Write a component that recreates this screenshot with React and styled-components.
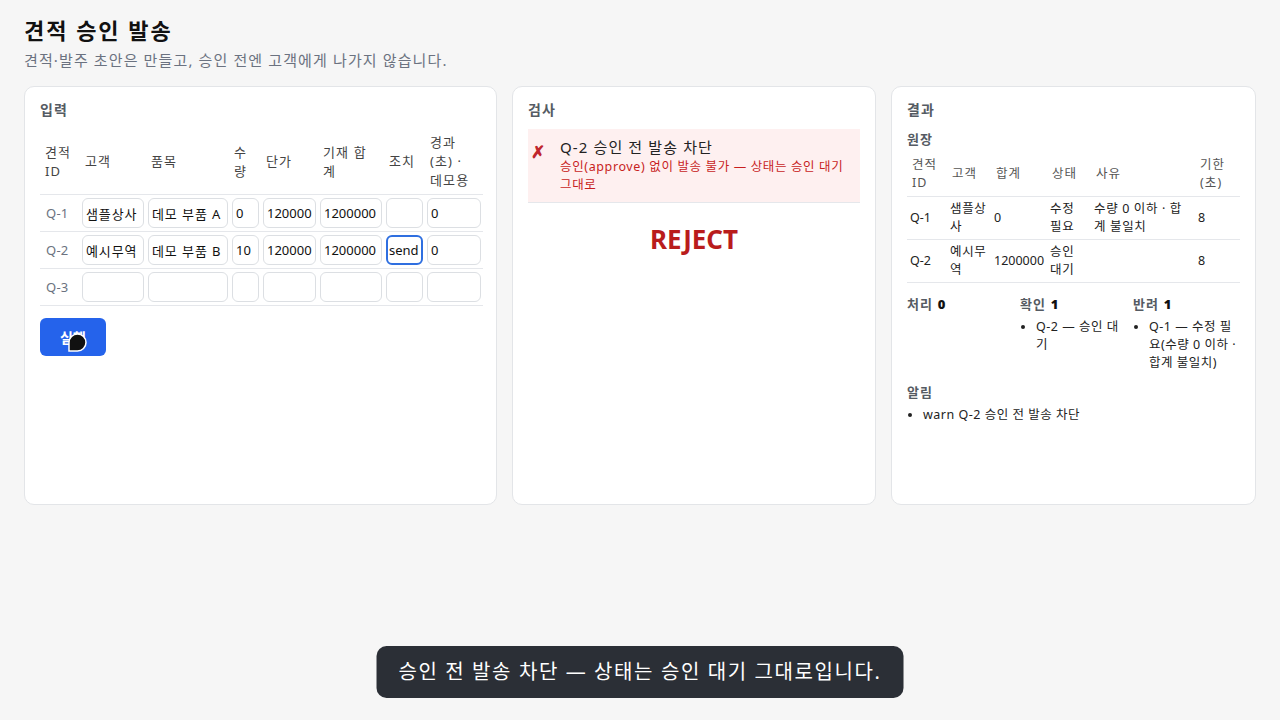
import React from 'react';
import styled, { createGlobalStyle } from 'styled-components';

const GlobalStyle = createGlobalStyle`
  html, body {
    margin: 0;
    padding: 0;
    background: #f6f6f6;
  }
  body {
    font-family: "Noto Sans", "Noto Sans CJK KR", sans-serif;
    color: #1f2328;
    letter-spacing: 0.07em;
  }
  * { box-sizing: border-box; }
`;

const Page = styled.div`
  padding: 14px 24px 24px;
  min-height: 100vh;
`;

const Title = styled.h1`
  margin: 0;
  font-size: 22px;
  line-height: 32px;
  font-weight: 700;
  letter-spacing: 0.09em;
  color: #111;
`;

const Subtitle = styled.p`
  margin: 3px 0 15px;
  font-size: 15px;
  line-height: 22px;
  color: #6b7280;
`;

const Columns = styled.div`
  display: grid;
  grid-template-columns: 473px 1fr 1fr;
  gap: 15px;
`;

const Card = styled.section`
  background: #fff;
  border: 1px solid #e3e5e8;
  border-radius: 10px;
  padding: 12px 15px 15px;
  min-height: 419px;
`;

const CardTitle = styled.h2`
  margin: 0 0 8px;
  font-size: 14px;
  line-height: 22px;
  font-weight: 700;
  color: #555b63;
`;

const Table = styled.table`
  width: 100%;
  border-collapse: collapse;
  table-layout: fixed;
  font-size: 13px;
`;

const Th = styled.th`
  text-align: left;
  font-weight: 400;
  color: #444;
  padding: 4px ${p => p.$pad || 5}px;
  line-height: 19px;
  vertical-align: middle;
  border-bottom: 1px solid #e5e7eb;
`;

const Td = styled.td`
  padding: 3px 2px;
  border-bottom: 1px solid #e5e7eb;
  vertical-align: middle;
`;

const IdCell = styled(Td)`
  padding-left: 6px;
  color: #6b7280;
  letter-spacing: 0.02em;
`;

const Field = styled.input`
  width: 100%;
  height: 30px;
  border: ${p => (p.$focused ? '2px solid #2f6fe0' : '1px solid #dcdfe3')};
  border-radius: 6px;
  padding: 0 ${p => (p.$focused ? 1 : 3)}px;
  font: inherit;
  font-size: 13px;
  letter-spacing: ${p => (p.$ko ? '0.07em' : '0')};
  color: #111;
  background: #fff;
  outline: none;
`;

const RunButton = styled.button`
  position: relative;
  margin-top: 12px;
  width: 66px;
  height: 38px;
  border: none;
  border-radius: 6px;
  background: #2563eb;
  color: #fff;
  font: inherit;
  font-size: 14px;
  font-weight: 700;
`;

const Pointer = styled.svg`
  position: absolute;
  left: 27px;
  top: 14px;
`;

const Alert = styled.div`
  display: flex;
  gap: 15px;
  background: #fef0f0;
  border-bottom: 1px solid #e5e7eb;
  padding: 7px 4px 8px 3px;
`;

const Cross = styled.span`
  color: #c0262d;
  font-size: 17px;
  font-weight: 700;
  line-height: 22px;
  margin-top: 5px;
  letter-spacing: 0;
`;

const AlertTitle = styled.div`
  font-size: 15px;
  line-height: 22px;
  color: #222;
`;

const AlertText = styled.div`
  font-size: 12.5px;
  line-height: 18px;
  letter-spacing: 0.05em;
  color: #c81e1e;
`;

const Verdict = styled.div`
  text-align: center;
  font-size: 26px;
  font-weight: 700;
  color: #b91c1c;
  margin-top: 18px;
  letter-spacing: 0;
`;

const SubTitle = styled.h3`
  margin: 0 0 2px;
  font-size: 13px;
  line-height: 20px;
  font-weight: 700;
  color: #555b63;
`;

const LedgerTable = styled.table`
  width: 100%;
  border-collapse: collapse;
  table-layout: fixed;
  font-size: 12.5px;
`;

const LTh = styled.th`
  text-align: left;
  font-weight: 400;
  color: #555;
  padding: 5px 3px 4px 5px;
  line-height: 18px;
  border-bottom: 1px solid #e5e7eb;
`;

const LTd = styled.td`
  padding: 3px 3px;
  line-height: 18px;
  color: #222;
  border-bottom: 1px solid #e5e7eb;
  letter-spacing: ${p => (p.$num ? '0' : '0.05em')};
`;

const Buckets = styled.div`
  display: grid;
  grid-template-columns: repeat(3, 1fr);
  gap: 0 6px;
  margin-top: 11px;
`;

const BucketLabel = styled.div`
  font-size: 13px;
  line-height: 20px;
  color: #555b63;
  font-weight: 700;

  b { color: #111; }
`;

const List = styled.ul`
  margin: 4px 0 0;
  padding-left: 16px;
  font-size: 12.5px;
  line-height: 18px;
  letter-spacing: 0.04em;
  color: #222;
`;

const Notice = styled.div`
  margin-top: 10px;
`;

const Toast = styled.div`
  position: fixed;
  bottom: 22px;
  left: 50%;
  transform: translateX(-50%);
  background: #2b2f36;
  color: #fff;
  border-radius: 10px;
  padding: 11px 22px;
  font-size: 20px;
  line-height: 30px;
  letter-spacing: 0.08em;
  white-space: nowrap;
`;

const inputRows = [
  { id: 'Q-1', customer: '샘플상사', item: '데모 부품 A', qty: '0', price: '120000', total: '1200000', action: '', elapsed: '0' },
  { id: 'Q-2', customer: '예시무역', item: '데모 부품 B', qty: '10', price: '120000', total: '1200000', action: 'send', elapsed: '0', focus: true },
  { id: 'Q-3', customer: '', item: '', qty: '', price: '', total: '', action: '', elapsed: '' },
];

const colWidths = [40, 66, 84, 31, 57, 66, 41, 58];
const ledgerWidths = [40, 44, 56, 44, 104, 45];

const App = () => {
  return (
    <>
      <GlobalStyle />
      <Page>
        <Title>견적 승인 발송</Title>
        <Subtitle>견적·발주 초안은 만들고, 승인 전엔 고객에게 나가지 않습니다.</Subtitle>
        <Columns>
          <Card>
            <CardTitle>입력</CardTitle>
            <Table>
              <colgroup>
                {colWidths.map((w, i) => <col key={i} style={{ width: w }} />)}
              </colgroup>
              <thead>
                <tr>
                  <Th>견적 ID</Th>
                  <Th>고객</Th>
                  <Th>품목</Th>
                  <Th $pad={4}>수량</Th>
                  <Th>단가</Th>
                  <Th>기재 합계</Th>
                  <Th>조치</Th>
                  <Th>경과 (초) · 데모용</Th>
                </tr>
              </thead>
              <tbody>
                {inputRows.map(r => (
                  <tr key={r.id}>
                    <IdCell>{r.id}</IdCell>
                    <Td><Field defaultValue={r.customer} $ko /></Td>
                    <Td><Field defaultValue={r.item} $ko /></Td>
                    <Td><Field defaultValue={r.qty} /></Td>
                    <Td><Field defaultValue={r.price} /></Td>
                    <Td><Field defaultValue={r.total} /></Td>
                    <Td><Field defaultValue={r.action} $focused={r.focus} /></Td>
                    <Td><Field defaultValue={r.elapsed} /></Td>
                  </tr>
                ))}
              </tbody>
            </Table>
            <RunButton>
              실행
              <Pointer width="21" height="21" viewBox="0 0 21 21">
                <path d="M2 19 L2 10.5 A8.5 8.5 0 1 1 10.5 19 Z" fill="#111" stroke="#fff" strokeWidth="1.5" />
              </Pointer>
            </RunButton>
          </Card>

          <Card>
            <CardTitle>검사</CardTitle>
            <Alert>
              <Cross>✗</Cross>
              <div>
                <AlertTitle>Q-2 승인 전 발송 차단</AlertTitle>
                <AlertText>승인(approve) 없이 발송 불가 — 상태는 승인 대기 그대로</AlertText>
              </div>
            </Alert>
            <Verdict>REJECT</Verdict>
          </Card>

          <Card>
            <CardTitle>결과</CardTitle>
            <SubTitle>원장</SubTitle>
            <LedgerTable>
              <colgroup>
                {ledgerWidths.map((w, i) => <col key={i} style={{ width: w }} />)}
              </colgroup>
              <thead>
                <tr>
                  <LTh>견적 ID</LTh>
                  <LTh>고객</LTh>
                  <LTh>합계</LTh>
                  <LTh>상태</LTh>
                  <LTh>사유</LTh>
                  <LTh>기한 (초)</LTh>
                </tr>
              </thead>
              <tbody>
                <tr>
                  <LTd $num>Q-1</LTd>
                  <LTd>샘플상사</LTd>
                  <LTd $num>0</LTd>
                  <LTd>수정 필요</LTd>
                  <LTd>수량 0 이하 · 합계 불일치</LTd>
                  <LTd $num>8</LTd>
                </tr>
                <tr>
                  <LTd $num>Q-2</LTd>
                  <LTd>예시무역</LTd>
                  <LTd $num>1200000</LTd>
                  <LTd>승인 대기</LTd>
                  <LTd></LTd>
                  <LTd $num>8</LTd>
                </tr>
              </tbody>
            </LedgerTable>
            <Buckets>
              <div>
                <BucketLabel>처리 <b>0</b></BucketLabel>
              </div>
              <div>
                <BucketLabel>확인 <b>1</b></BucketLabel>
                <List><li>Q-2 — 승인 대기</li></List>
              </div>
              <div>
                <BucketLabel>반려 <b>1</b></BucketLabel>
                <List><li>Q-1 — 수정 필요(수량 0 이하 · 합계 불일치)</li></List>
              </div>
            </Buckets>
            <Notice>
              <SubTitle>알림</SubTitle>
              <List><li>warn Q-2 승인 전 발송 차단</li></List>
            </Notice>
          </Card>
        </Columns>
      </Page>
      <Toast>승인 전 발송 차단 — 상태는 승인 대기 그대로입니다.</Toast>
    </>
  );
};

export default App;
